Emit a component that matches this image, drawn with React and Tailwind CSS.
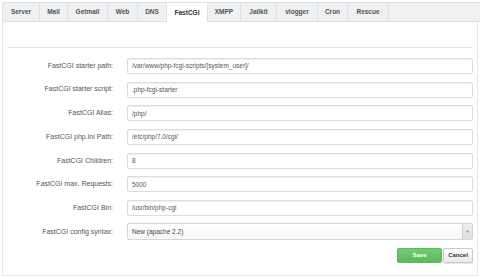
import React from "react";

const tabs = [
  { name: "Server", w: "w-[37px]" },
  { name: "Mail", w: "w-[28px]" },
  { name: "Getmail", w: "w-[40px]" },
  { name: "Web", w: "w-[30px]" },
  { name: "DNS", w: "w-[29px]" },
  { name: "FastCGI", w: "w-[41px]", active: true },
  { name: "XMPP", w: "w-[33px]" },
  { name: "Jailkit", w: "w-[36px]" },
  { name: "vlogger", w: "w-[41px]" },
  { name: "Cron", w: "w-[30px]" },
  { name: "Rescue", w: "w-[41px]" },
];

const fields = [
  { label: "FastCGI starter path:", value: "/var/www/php-fcgi-scripts/[system_user]/" },
  { label: "FastCGI starter script:", value: ".php-fcgi-starter" },
  { label: "FastCGI Alias:", value: "/php/" },
  { label: "FastCGI php.ini Path:", value: "/etc/php/7.0/cgi/" },
  { label: "FastCGI Children:", value: "8" },
  { label: "FastCGI max. Requests:", value: "5000" },
  { label: "FastCGI Bin:", value: "/usr/bin/php-cgi" },
];

function Row({ label, children }) {
  return (
    <div className="flex items-center h-[16px]">
      <label className="w-[106px] text-right text-[7px] text-[#555]">{label}</label>
      <div className="ml-[14px] flex-1">{children}</div>
    </div>
  );
}

export default function App() {
  return (
    <div className="w-[480px] h-[277px] bg-white overflow-hidden font-['Liberation_Sans',Arial,sans-serif]">
      <div className="pt-[2px] pl-[2px]">
        <div className="flex h-[20px] bg-[#eef0f2] border-t border-l border-[#dfe2e5]">
          {tabs.map((t) => (
            <div
              key={t.name}
              className={`${t.w} flex items-center justify-center text-[6.5px] font-bold border-r border-[#dfe2e5] ${
                t.active ? "bg-white text-[#333]" : "text-[#555] border-b"
              }`}
            >
              {t.name}
            </div>
          ))}
          <div className="flex-1 border-b border-[#dfe2e5]" />
        </div>
        <div className="mr-[2px] h-[254px] border-l border-r border-b border-[#e6e8ea] px-[4px]">
          <div className="h-[26px] border-b border-[#e3e5e7]" />
          <div className="flex flex-col gap-[7.7px] pt-[10px]">
            {fields.map((f) => (
              <Row key={f.label} label={f.label}>
                <div className="h-[16px] border border-[#dcdcdc] rounded-[2px] shadow-[inset_0_1px_1px_rgba(0,0,0,0.06)] flex items-center pl-[4px] text-[6.5px] text-[#555]">
                  {f.value}
                </div>
              </Row>
            ))}
            <Row label="FastCGI config syntax:">
              <div className="h-[17px] border border-[#d6d6d6] rounded-[2px] flex items-center text-[6.5px] text-[#444] bg-gradient-to-b from-white to-[#f6f6f6]">
                <span className="flex-1 pl-[4px]">New (apache 2.2)</span>
                <span className="w-[10px] h-full border-l border-[#d0d0d0] bg-gradient-to-b from-[#eee] to-[#ddd] flex items-center justify-center text-[4px] text-[#777]">
                  ▼
                </span>
              </div>
            </Row>
          </div>
          <div className="flex justify-end gap-[1px] mt-[8px]">
            <button className="w-[45px] h-[15px] rounded-[2px] border border-[#5cb85c] bg-gradient-to-b from-[#72cd72] to-[#5cb85c] text-white text-[6px] font-bold">
              Save
            </button>
            <button className="w-[30px] h-[15px] rounded-[2px] border border-[#ccc] bg-gradient-to-b from-white to-[#eaeaea] text-[#333] text-[6px] font-bold shadow-[0_1px_1px_rgba(0,0,0,0.1)]">
              Cancel
            </button>
          </div>
        </div>
      </div>
    </div>
  );
}
